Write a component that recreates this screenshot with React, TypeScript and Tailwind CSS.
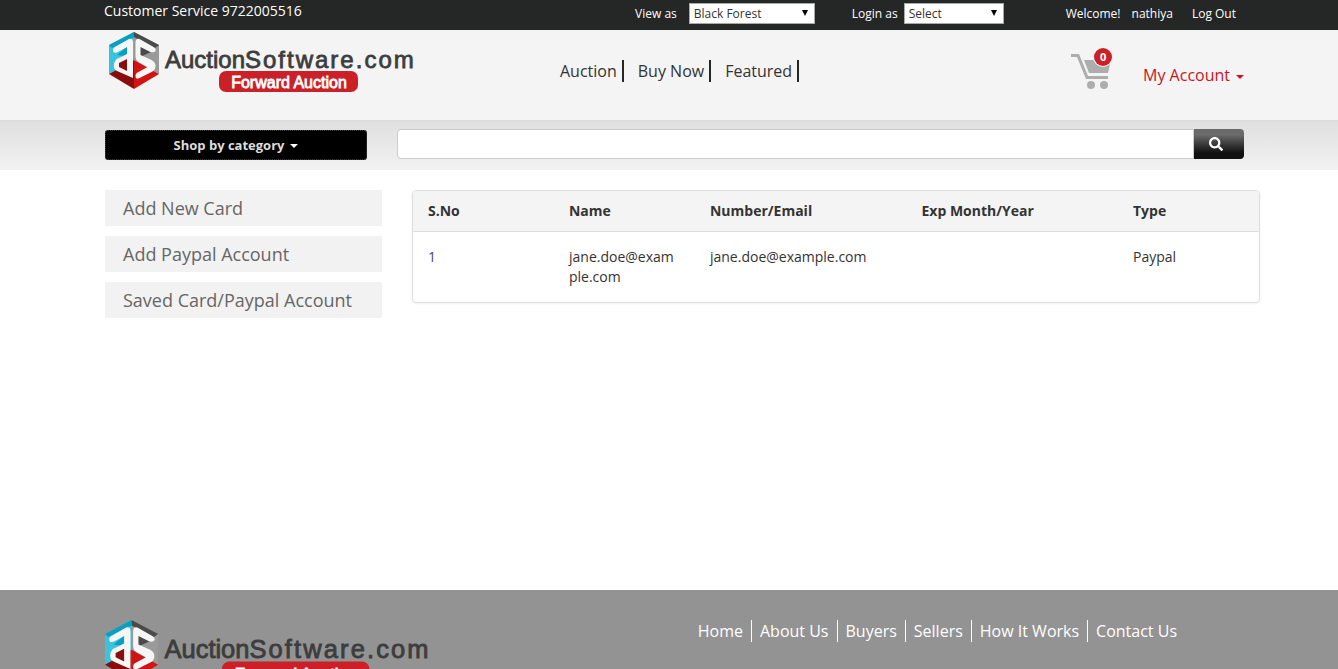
import { FaSearch } from "react-icons/fa";

const NAV = ["Auction", "Buy Now", "Featured"];
const SIDE_LINKS = ["Add New Card", "Add Paypal Account", "Saved Card/Paypal Account"];
const FOOTER_LINKS = ["Home", "About Us", "Buyers", "Sellers", "How It Works", "Contact Us"];

const COLUMNS = [
  { label: "S.No", width: "w-1/6" },
  { label: "Name", width: "w-1/6" },
  { label: "Number/Email", width: "w-1/4" },
  { label: "Exp Month/Year", width: "w-1/4" },
  { label: "Type", width: "w-1/6" },
];

const CARDS = [
  { name: "jane.doe@example.com", number: "jane.doe@example.com", exp: "", type: "Paypal" },
];

function Logo({ className }: { className?: string }) {
  return (
    <svg viewBox="0 0 306 62" className={className} role="img" aria-label="AuctionSoftware.com Forward Auction">
      {/* Cube */}
      <path d="M25 0 0 13v29l25-14z" fill="#3cc3dc" />
      <path d="M25 0 0 13l3 3L25 5z" fill="#0a9fc0" />
      <path d="M25 0 50 13v29L25 28z" fill="#9a9a9a" />
      <path d="M25 0 50 13l-4 3L25 5z" fill="#4a4a4a" />
      <path d="M25 28 0 42l25 15z" fill="#8a0d0d" />
      <path d="M25 28 50 42 25 57z" fill="#d01414" />
      <path d="m8 23 11-9v8l-4 2z" fill="#0a9fc0" />
      <path d="m31 14 11 6-11 5z" fill="#4a4a4a" />
      {/* Letter shapes on the two upper faces */}
      <path d="M4 18q0-2 2-3L20 7q4-1 4 4v35L8 39q-4-2-3-7 1-5 5-6l8-4v-7L9 20q-5 2-5-2z" fill="#f6f6f6" />
      <path d="M26.500 11q0-5 4-4l14 8q3 2 2 4t-5 1l-10-5v8l11 5q4 2 4 6t-4 6l-12 6q-4 2-4-2 0-3 3-4l9-5-9-5q-3-2-3-5z" fill="#f6f6f6" />
      <path d="m10 31 8-4v12l-8-4z" fill="#8a0d0d" />
      {/* Wordmark */}
      <g fontFamily="'Liberation Sans', Arial, sans-serif" fill="#3d3d3d" stroke="#3d3d3d" strokeWidth="0.8">
        <text x="56" y="36" fontSize="24">Auction</text>
        <text x="136" y="36" fontSize="24" letterSpacing="2">Software.com</text>
      </g>
      <rect x="110" y="39" width="139" height="21" rx="7" fill="#cb2027" />
      <text x="180" y="56" fontSize="16" textAnchor="middle" fill="#fff" stroke="#fff" strokeWidth="0.8" fontFamily="'Liberation Sans', Arial, sans-serif">
        Forward Auction
      </text>
    </svg>
  );
}

function Cart() {
  return (
    <a href="#" aria-label="Cart" className="relative block w-[41px] h-[42px]">
      <svg viewBox="0 0 41 42" className="w-full h-full" fill="#adadad">
        <path d="M0 6h8l9 22h20v3H15L6 9H0z" />
        <path d="M13 12h27l-3 13H18z" />
        <circle cx="20" cy="37" r="4" />
        <circle cx="33" cy="37" r="4" />
        <circle cx="32" cy="9" r="10" fill="#f4f4f4" />
      </svg>
      <span className="absolute top-0 right-0 flex items-center justify-center w-[18px] h-[18px] rounded-full bg-[#cb2027] text-white text-[11px] font-bold">
        0
      </span>
    </a>
  );
}

function TopBar() {
  return (
    <div className="h-[30px] bg-[#252726] text-white">
      <div className="mx-auto max-w-[1182px] h-full pl-[26px] pr-[24px] flex justify-between">
        <p className="text-sm leading-[22px]">Customer Service 9722005516</p>
        <div className="flex items-center h-[27px] text-xs">
          <label htmlFor="view-as">View as</label>
          <span className="relative ml-3 mr-[37px]">
            <select id="view-as" className="block appearance-none w-[126px] h-[21px] pl-1 bg-white border border-[#a9a9a9] text-[#333]">
              <option>Black Forest</option>
            </select>
            <Arrow />
          </span>
          <label htmlFor="login-as">Login as</label>
          <span className="relative ml-[6px] mr-[62px]">
            <select id="login-as" className="block appearance-none w-[100px] h-[21px] pl-1 bg-white border border-[#a9a9a9] text-[#333]">
              <option>Select</option>
            </select>
            <Arrow />
          </span>
          <span>Welcome!</span>
          <a href="#" className="ml-[11px]">nathiya</a>
          <a href="#" className="ml-[19px]">Log Out</a>
        </div>
      </div>
    </div>
  );
}

function Arrow() {
  return (
    <svg viewBox="0 0 6 6" className="absolute right-[7px] top-[7px] w-[6px] h-[6px] pointer-events-none">
      <path d="M0 0h6L3 6z" fill="#000" />
    </svg>
  );
}

function Header() {
  return (
    <header className="h-[90px] bg-[#f4f4f4]">
      <div className="mx-auto max-w-[1182px] pl-[31px] pr-4 pt-[2px] flex items-start">
        <a href="#"><Logo className="w-[306px] h-[62px]" /></a>
        <nav className="flex gap-[14px] ml-[145px] mt-[28px]">
          {NAV.map((item) => (
            <a key={item} href="#" className="pr-[5px] border-r-2 border-[#252726] text-base leading-[22px] text-[#333]">
              {item}
            </a>
          ))}
        </nav>
        <div className="flex ml-auto mt-4">
          <Cart />
          <button className="flex items-center gap-[6px] ml-[31px] mt-4 h-[22px] text-base text-[#c9141d]">
            My Account
            <span className="mt-1 border-x-4 border-t-4 border-x-transparent border-t-[#c9141d]" />
          </button>
        </div>
      </div>
    </header>
  );
}

function SearchBar() {
  return (
    <div className="h-[50px] border-t border-[#dcdcdc] bg-linear-to-b from-[#dfdfdf] to-[#f2f2f2]">
      <div className="mx-auto max-w-[1182px] pl-[27px] pr-4 pt-2 flex gap-[30px]">
        <button className="flex items-center justify-center gap-[6px] w-[262px] h-[30px] mt-px pt-px rounded-[3px] border border-dotted border-[#444] bg-black text-[13px] font-bold text-[#ddd]">
          Shop by category
          <span className="border-x-4 border-t-4 border-x-transparent border-t-white" />
        </button>
        <form className="flex flex-1">
          <input aria-label="Search" className="flex-1 min-w-0 h-[30px] px-3 rounded-l border border-[#ccc] bg-white text-sm outline-none" />
          <button type="button" aria-label="Search" className="flex items-center w-[50px] h-[30px] pl-[15px] rounded-r bg-linear-to-b from-[#6b6b6b] from-20% to-[#111] to-80% text-white text-sm">
            <FaSearch />
          </button>
        </form>
      </div>
    </div>
  );
}

function CardTable() {
  return (
    <div className="flex-1 rounded border border-[#ddd] shadow-xs overflow-hidden">
      <table className="w-full table-fixed text-left text-sm leading-5 text-[#333]">
        <thead className="bg-[#f4f4f4]">
          <tr className="border-b border-[#ddd]">
            {COLUMNS.map((col) => (
              <th key={col.label} className={`${col.width} px-[15px] py-[10px] font-bold`}>{col.label}</th>
            ))}
          </tr>
        </thead>
        <tbody>
          {CARDS.map((card, i) => (
            <tr key={i} className="align-top break-all">
              <td className="px-[15px] py-[15px]"><a href="#" className="text-[#447]">{i + 1}</a></td>
              <td className="px-[15px] py-[15px]">{card.name}</td>
              <td className="px-[15px] py-[15px]">{card.number}</td>
              <td className="px-[15px] py-[15px]">{card.exp}</td>
              <td className="px-[15px] py-[15px]">{card.type}</td>
            </tr>
          ))}
        </tbody>
      </table>
    </div>
  );
}

function Footer() {
  return (
    <footer className="h-[220px] bg-[#939393]">
      <div className="mx-auto max-w-[1182px] pl-[27px] pr-[83px] pt-[30px] flex items-start justify-between">
        <a href="#"><Logo className="w-[325px] h-[66px]" /></a>
        <nav className="flex text-base leading-[22px] text-white">
          {FOOTER_LINKS.map((item) => (
            <a key={item} href="#" className="px-2 border-r border-white last:border-0 last:pr-0">{item}</a>
          ))}
        </nav>
      </div>
    </footer>
  );
}

export default function App() {
  return (
    <div className="h-screen overflow-hidden bg-white font-['Open_Sans',sans-serif]">
      <TopBar />
      <Header />
      <SearchBar />
      <main className="mx-auto max-w-[1182px] min-h-[420px] pl-[27px] pt-5 flex items-start gap-[30px]">
        <ul className="w-[277px] space-y-[10px]">
          {SIDE_LINKS.map((item) => (
            <li key={item}>
              <a href="#" className="block h-9 pl-[18px] bg-[#f2f2f2] text-lg leading-9 text-[#666]">{item}</a>
            </li>
          ))}
        </ul>
        <CardTable />
      </main>
      <Footer />
    </div>
  );
}
